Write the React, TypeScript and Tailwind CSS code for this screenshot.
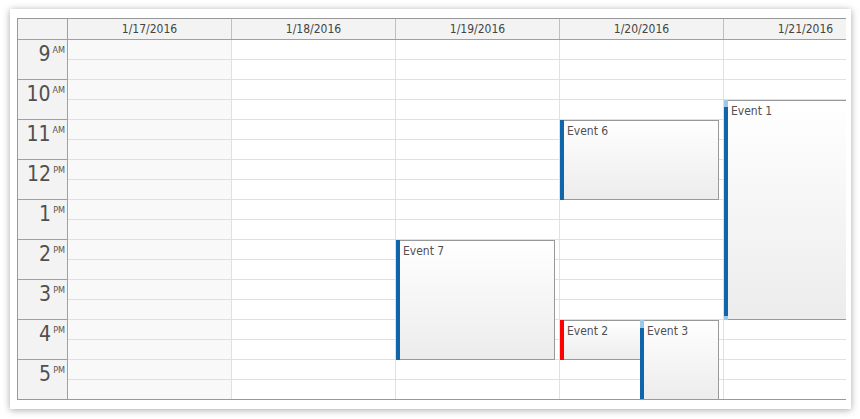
const days = ['1/17/2016', '1/18/2016', '1/19/2016', '1/20/2016', '1/21/2016'];

const hours: [string, string][] = [
  ['9', 'AM'],
  ['10', 'AM'],
  ['11', 'AM'],
  ['12', 'PM'],
  ['1', 'PM'],
  ['2', 'PM'],
  ['3', 'PM'],
  ['4', 'PM'],
  ['5', 'PM'],
];

type CalEvent = {
  text: string;
  day: number;
  start: number;
  end: number;
  half?: 'left' | 'right';
  bar: string;
  barTop: number;
  barBottom: number;
};

const events: CalEvent[] = [
  { text: 'Event 7', day: 2, start: 14, end: 17, bar: 'bg-[#1066a8]', barTop: 0, barBottom: 0 },
  { text: 'Event 6', day: 3, start: 11, end: 13, bar: 'bg-[#1066a8]', barTop: 0, barBottom: 0 },
  { text: 'Event 2', day: 3, start: 16, end: 17, half: 'left', bar: 'bg-[#ff0000]', barTop: 0, barBottom: 0 },
  { text: 'Event 3', day: 3, start: 16, end: 18, half: 'right', bar: 'bg-[#1066a8]', barTop: 8, barBottom: 0 },
  { text: 'Event 1', day: 4, start: 10.5, end: 16, bar: 'bg-[#1066a8]', barTop: 7, barBottom: 4 },
];

const HOUR = 40;

function EventBox({ ev }: { ev: CalEvent }) {
  const top = (ev.start - 9) * HOUR;
  const height = (ev.end - ev.start) * HOUR;
  const left = ev.half === 'right' ? 80 : 0;
  const width = ev.half === 'right' ? 79 : ev.half === 'left' ? 81 : 159;
  return (
    <div className="absolute" style={{ top, height, left, width }}>
      <div className="h-full border border-[#999] bg-linear-to-b from-white to-[#ececec] pl-[6px] pt-[3px] text-[12px] leading-[15px] text-[#505050] whitespace-nowrap">
        {ev.text}
      </div>
      <div className="absolute left-0 top-0 bottom-0 w-[4px] bg-[#9dc8e8]">
        <div
          className={`absolute left-0 w-full ${ev.bar}`}
          style={{ top: ev.barTop, bottom: ev.barBottom }}
        />
      </div>
    </div>
  );
}

export default function App() {
  return (
    <div className="h-[419px] w-full bg-white pt-[9px] pl-[10px] font-['DejaVu_Sans_Condensed','DejaVu_Sans',sans-serif]">
      <div className="w-[841px] h-[400px] bg-white pt-[9px] pl-[7px] shadow-[0_1px_7px_rgba(0,0,0,0.35)]">
        <div className="w-[829px] border-l border-t border-b border-[#999] overflow-hidden bg-white">
          {/* column headers */}
          <div className="flex h-[21px] border-b border-[#a0a0a0] bg-[#f3f3f3]">
            <div className="w-[50px] flex-none border-r border-[#a0a0a0]" />
            {days.map((d) => (
              <div
                key={d}
                className="w-[164px] flex-none border-r border-[#c0c0c0] text-center text-[12px] leading-[20px] text-[#444]"
              >
                {d}
              </div>
            ))}
          </div>

          {/* body */}
          <div className="flex h-[359px] overflow-hidden">
            <div className="w-[50px] flex-none border-r border-[#a0a0a0] bg-[#f3f3f3]">
              {hours.map(([h, m]) => (
                <div key={h + m} className="h-[40px] border-b border-[#a0a0a0] flex justify-end items-start text-[#505050]">
                  <span className="text-[21px] leading-[24px] mt-[2px]">{h}</span>
                  <span className="text-[9px] leading-[10px] mt-[5px] px-[2px] text-[#555]">{m}</span>
                </div>
              ))}
            </div>

            {days.map((d, i) => (
              <div
                key={d}
                className={`relative w-[164px] flex-none border-r border-[#e0e0e0] ${i === 0 ? 'bg-[#f9f9f9]' : 'bg-white'}`}
              >
                {Array.from({ length: 18 }).map((_, k) => (
                  <div key={k} className="h-[20px] border-b border-[#e0e0e0]" />
                ))}
                {events
                  .filter((e) => e.day === i)
                  .map((e) => (
                    <EventBox key={e.text} ev={e} />
                  ))}
              </div>
            ))}
          </div>
        </div>
      </div>
    </div>
  );
}
